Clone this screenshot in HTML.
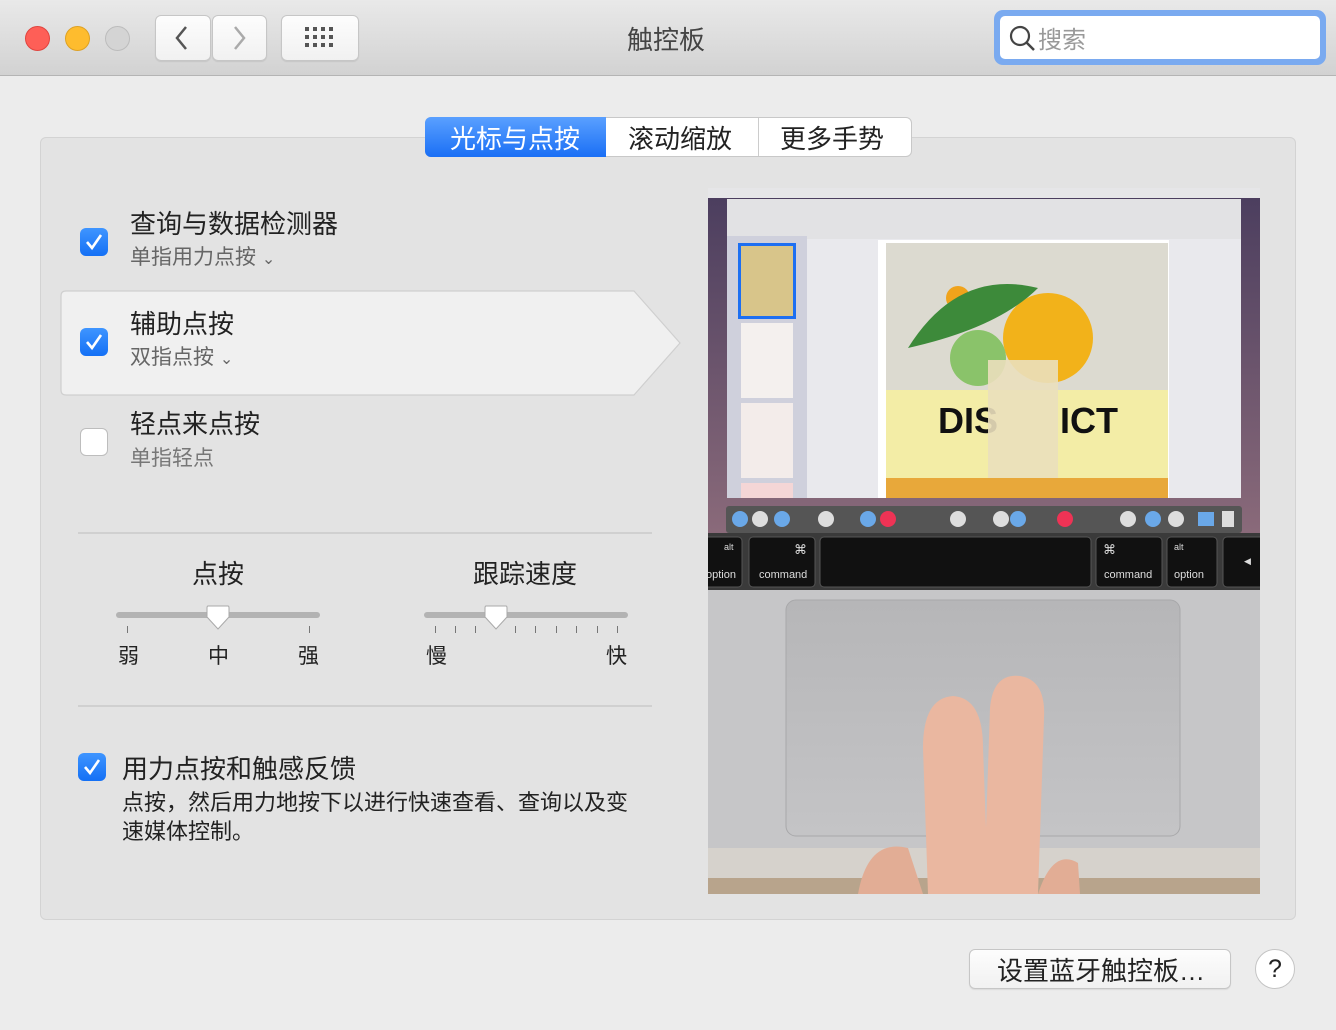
<!DOCTYPE html>
<html><head><meta charset="utf-8"><style>
*{margin:0;padding:0;box-sizing:border-box}
body{width:1336px;height:1030px;background:#ececec;font-family:"Liberation Sans","Noto Sans CJK SC",sans-serif;position:relative;overflow:hidden;color:#222}
.abs{position:absolute}
.tb{left:0;top:0;width:1336px;height:76px;background:linear-gradient(#e9e9e9,#d2d2d2);border-bottom:1px solid #b4b4b4}
.light{width:25px;height:25px;border-radius:50%;top:26px}
.btn{background:linear-gradient(#fdfdfd,#f1f1f1);border:1px solid #c6c6c6;border-radius:6px;box-shadow:0 1px 1px rgba(0,0,0,.08)}
.panel{left:40px;top:137px;width:1256px;height:783px;background:#e3e3e3;border:1px solid #d3d3d3;border-radius:6px}
.cb{width:28px;height:28px;border-radius:6px;background:linear-gradient(#3f95ff,#1470f5);}
.cb.off{background:#fff;border:1px solid #bdbdbd}
.t1{font-size:26px;color:#222}
.t2{font-size:21px;color:#666}
.sep{height:2px;background:#d0d0d0;left:78px;width:574px}
.track{height:6px;border-radius:3px;background:#b3b3b3}
.tick{width:1px;height:7px;background:#777;top:626px}
.lbl{font-size:21px;top:640px;color:#222}
</style></head><body>
<div class="abs tb"></div>
<div class="abs light" style="left:25px;background:#fe5f57;border:1px solid #e0443e"></div>
<div class="abs light" style="left:65px;background:#febc2e;border:1px solid #dea123"></div>
<div class="abs light" style="left:105px;background:#d4d4d4;border:1px solid #bcbcbc"></div>
<div class="abs btn" style="left:155px;top:15px;width:56px;height:46px"></div>
<div class="abs btn" style="left:212px;top:15px;width:55px;height:46px"></div>
<svg class="abs" style="left:172px;top:25px" width="20" height="26"><path d="M14 2 L5 13 L14 24" stroke="#555" stroke-width="2.5" fill="none"/></svg>
<svg class="abs" style="left:230px;top:25px" width="20" height="26"><path d="M5 2 L14 13 L5 24" stroke="#aaa" stroke-width="2.5" fill="none"/></svg>
<div class="abs btn" style="left:281px;top:15px;width:78px;height:46px"></div>
<svg class="abs" style="left:305px;top:27px" width="30" height="22"><g fill="#555">
<rect x="0" y="0" width="4" height="4"/><rect x="8" y="0" width="4" height="4"/><rect x="16" y="0" width="4" height="4"/><rect x="24" y="0" width="4" height="4"/>
<rect x="0" y="8" width="4" height="4"/><rect x="8" y="8" width="4" height="4"/><rect x="16" y="8" width="4" height="4"/><rect x="24" y="8" width="4" height="4"/>
<rect x="0" y="16" width="4" height="4"/><rect x="8" y="16" width="4" height="4"/><rect x="16" y="16" width="4" height="4"/><rect x="24" y="16" width="4" height="4"/></g></svg>
<div class="abs" style="left:627px;top:20px;font-size:26px;color:#444">触控板</div>
<div class="abs" style="left:994px;top:10px;width:332px;height:55px;border-radius:9px;background:#7aaaf0"></div>
<div class="abs" style="left:1000px;top:16px;width:320px;height:43px;border-radius:5px;background:#fff"></div>
<svg class="abs" style="left:1009px;top:25px" width="28" height="28"><circle cx="11" cy="11" r="9" stroke="#444" stroke-width="2.2" fill="none"/><path d="M17.5 17.5 L25 25" stroke="#444" stroke-width="2.5"/></svg>
<div class="abs" style="left:1038px;top:20px;font-size:24px;color:#999">搜索</div>

<div class="abs panel"></div>
<div class="abs" style="left:425px;top:117px;width:487px;height:40px;background:#fff;border:1px solid #c8c8c8;border-radius:6px"></div>
<div class="abs" style="left:425px;top:117px;width:181px;height:40px;background:linear-gradient(#5aa0ff,#1a6ff5);border-radius:6px 0 0 6px"></div>
<div class="abs" style="left:758px;top:118px;width:1px;height:38px;background:#ccc"></div>
<div class="abs" style="left:450px;top:119px;font-size:26px;color:#fff">光标与点按</div>
<div class="abs" style="left:628px;top:119px;font-size:26px">滚动缩放</div>
<div class="abs" style="left:780px;top:119px;font-size:26px">更多手势</div>

<svg class="abs" style="left:60px;top:290px" width="624" height="108"><path d="M6 1 H574 L620 53 L574 105 H6 Q1 105 1 100 V6 Q1 1 6 1Z" fill="#f0f0f0" stroke="#cfcfcf" stroke-width="1.2"/></svg>

<div class="abs cb" style="left:80px;top:228px"></div>
<svg class="abs" style="left:80px;top:228px" width="28" height="28"><path d="M7 14 L12 20 L21 7" stroke="#fff" stroke-width="2.6" fill="none"/></svg>
<div class="abs t1" style="left:130px;top:204px">查询与数据检测器</div>
<div class="abs t2" style="left:130px;top:241px">单指用力点按 <span style="font-size:16px">⌄</span></div>

<div class="abs cb" style="left:80px;top:328px"></div>
<svg class="abs" style="left:80px;top:328px" width="28" height="28"><path d="M7 14 L12 20 L21 7" stroke="#fff" stroke-width="2.6" fill="none"/></svg>
<div class="abs t1" style="left:130px;top:304px">辅助点按</div>
<div class="abs t2" style="left:130px;top:341px">双指点按 <span style="font-size:16px">⌄</span></div>

<div class="abs cb off" style="left:80px;top:428px"></div>
<div class="abs t1" style="left:130px;top:404px">轻点来点按</div>
<div class="abs t2" style="left:130px;top:442px;color:#777">单指轻点</div>

<div class="abs sep" style="top:532px"></div>
<div class="abs" style="left:192px;top:554px;font-size:26px">点按</div>
<div class="abs" style="left:473px;top:554px;font-size:26px">跟踪速度</div>
<div class="abs track" style="left:116px;top:612px;width:204px"></div>
<div class="abs track" style="left:424px;top:612px;width:204px"></div>
<div class="abs tick" style="left:127px"></div><div class="abs tick" style="left:309px"></div>
<div class="abs tick" style="left:435px"></div><div class="abs tick" style="left:455px"></div><div class="abs tick" style="left:475px"></div><div class="abs tick" style="left:515px"></div><div class="abs tick" style="left:535px"></div><div class="abs tick" style="left:556px"></div><div class="abs tick" style="left:576px"></div><div class="abs tick" style="left:597px"></div><div class="abs tick" style="left:617px"></div>
<svg class="abs" style="left:205px;top:604px" width="26" height="28"><path d="M3 2 H23 Q24 2 24 4 V13 L13 25 L2 13 V4 Q2 2 3 2Z" fill="#fff" stroke="#aaa"/></svg>
<svg class="abs" style="left:483px;top:604px" width="26" height="28"><path d="M3 2 H23 Q24 2 24 4 V13 L13 25 L2 13 V4 Q2 2 3 2Z" fill="#fff" stroke="#aaa"/></svg>
<div class="abs lbl" style="left:118px">弱</div><div class="abs lbl" style="left:208px">中</div><div class="abs lbl" style="left:298px">强</div>
<div class="abs lbl" style="left:426px">慢</div><div class="abs lbl" style="left:606px">快</div>
<div class="abs sep" style="top:705px"></div>

<div class="abs cb" style="left:78px;top:753px"></div>
<svg class="abs" style="left:78px;top:753px" width="28" height="28"><path d="M7 14 L12 20 L21 7" stroke="#fff" stroke-width="2.6" fill="none"/></svg>
<div class="abs t1" style="left:122px;top:749px">用力点按和触感反馈</div>
<div class="abs" style="left:122px;top:788px;font-size:22px;line-height:29px;width:520px">点按，然后用力地按下以进行快速查看、查询以及变速媒体控制。</div>

<svg class="abs" style="left:708px;top:188px" width="552" height="706" viewBox="0 0 552 706">
<defs><linearGradient id="desk" x1="0" y1="0" x2="0" y2="1"><stop offset="0" stop-color="#4a3d5e"/><stop offset="1" stop-color="#8a6a7a"/></linearGradient>
<linearGradient id="tp" x1="0" y1="0" x2="0" y2="1"><stop offset="0" stop-color="#b6b6b8"/><stop offset="1" stop-color="#c4c4c6"/></linearGradient></defs>
<rect width="552" height="345" fill="url(#desk)"/>
<rect width="552" height="10" fill="#e6e6e8"/>
<rect x="19" y="11" width="514" height="299" fill="#e9e9ed"/>
<rect x="19" y="11" width="514" height="40" fill="#e2e2e4"/>
<rect x="19" y="48" width="80" height="262" fill="#cfd0dc"/>
<rect x="30" y="55" width="58" height="76" fill="#1d6ff2"/>
<rect x="33" y="58" width="52" height="70" fill="#d8c58a"/>
<rect x="33" y="135" width="52" height="75" fill="#f4f0ee"/>
<rect x="33" y="215" width="52" height="75" fill="#f3ecea"/>
<rect x="33" y="295" width="52" height="15" fill="#f4d6d6"/>
<rect x="170" y="52" width="291" height="258" fill="#fff"/>
<rect x="178" y="55" width="282" height="255" fill="#dcdad0"/>
<circle cx="340" cy="150" r="45" fill="#f2b21a"/><circle cx="270" cy="170" r="28" fill="#8ac36a"/><circle cx="250" cy="110" r="12" fill="#f0a31b"/>
<path d="M200 160 Q250 80 330 100 Q290 140 200 160Z" fill="#3d8a3a"/>
<rect x="178" y="202" width="282" height="88" fill="#f3eda6"/>
<text x="230" y="245" font-family="Liberation Sans" font-weight="bold" font-size="36" fill="#111">DIS</text>
<text x="352" y="245" font-family="Liberation Sans" font-weight="bold" font-size="36" fill="#111">ICT</text>
<rect x="280" y="172" width="70" height="118" fill="#eadfbd" opacity=".9"/>
<rect x="178" y="290" width="282" height="20" fill="#e8a83a"/>
<rect x="18" y="318" width="516" height="27" rx="3" fill="#555"/>
<g fill="#6aa8e8"><circle cx="32" cy="331" r="8"/><circle cx="74" cy="331" r="8"/><circle cx="160" cy="331" r="8"/><circle cx="310" cy="331" r="8"/><circle cx="445" cy="331" r="8"/><rect x="490" y="324" width="16" height="14"/></g>
<g fill="#ddd"><circle cx="52" cy="331" r="8"/><circle cx="118" cy="331" r="8"/><circle cx="250" cy="331" r="8"/><circle cx="293" cy="331" r="8"/><circle cx="420" cy="331" r="8"/><circle cx="468" cy="331" r="8"/><rect x="514" y="323" width="12" height="16"/></g>
<g fill="#e35"><circle cx="180" cy="331" r="8"/><circle cx="357" cy="331" r="8"/></g>
<rect x="0" y="345" width="552" height="57" fill="#3a3a3a"/>
<g fill="#111" stroke="#555"><rect x="-10" y="349" width="44" height="50" rx="4"/><rect x="41" y="349" width="66" height="50" rx="4"/><rect x="112" y="349" width="271" height="50" rx="4"/><rect x="388" y="349" width="66" height="50" rx="4"/><rect x="459" y="349" width="50" height="50" rx="4"/><rect x="515" y="349" width="50" height="50" rx="4"/></g>
<g font-family="Liberation Sans" font-size="11" fill="#ddd"><text x="-2" y="390">option</text><text x="51" y="390">command</text><text x="396" y="390">command</text><text x="466" y="390">option</text><text x="16" y="362" font-size="9">alt</text><text x="466" y="362" font-size="9">alt</text><text x="86" y="366" font-size="13">⌘</text><text x="395" y="366" font-size="13">⌘</text><text x="536" y="376" font-size="9">◀</text></g>
<rect x="0" y="402" width="552" height="304" fill="#c6c6c8"/>
<rect x="78" y="412" width="394" height="236" rx="10" fill="url(#tp)" stroke="#a8a8aa"/>
<rect x="0" y="660" width="552" height="46" fill="#d6d2cc"/>
<rect x="0" y="690" width="552" height="16" fill="#b8a48c"/>
<path d="M220 706 L215 560 Q215 510 245 508 Q275 510 275 560 L278 640 L282 520 Q285 485 312 488 Q338 492 336 530 L330 706Z" fill="#eab7a0"/>
<path d="M150 706 Q160 650 200 660 L215 706Z" fill="#e2ad95"/>
<path d="M330 706 Q345 660 370 675 L372 706Z" fill="#e2ad95"/>
</svg>

<div class="abs btn" style="left:969px;top:949px;width:262px;height:40px;border-radius:6px"></div>
<div class="abs" style="left:997px;top:951px;font-size:26px">设置蓝牙触控板…</div>
<div class="abs" style="left:1255px;top:949px;width:40px;height:40px;border-radius:50%;background:#fff;border:1px solid #c4c4c4;text-align:center;font-size:25px;line-height:38px">?</div>
</body></html>
